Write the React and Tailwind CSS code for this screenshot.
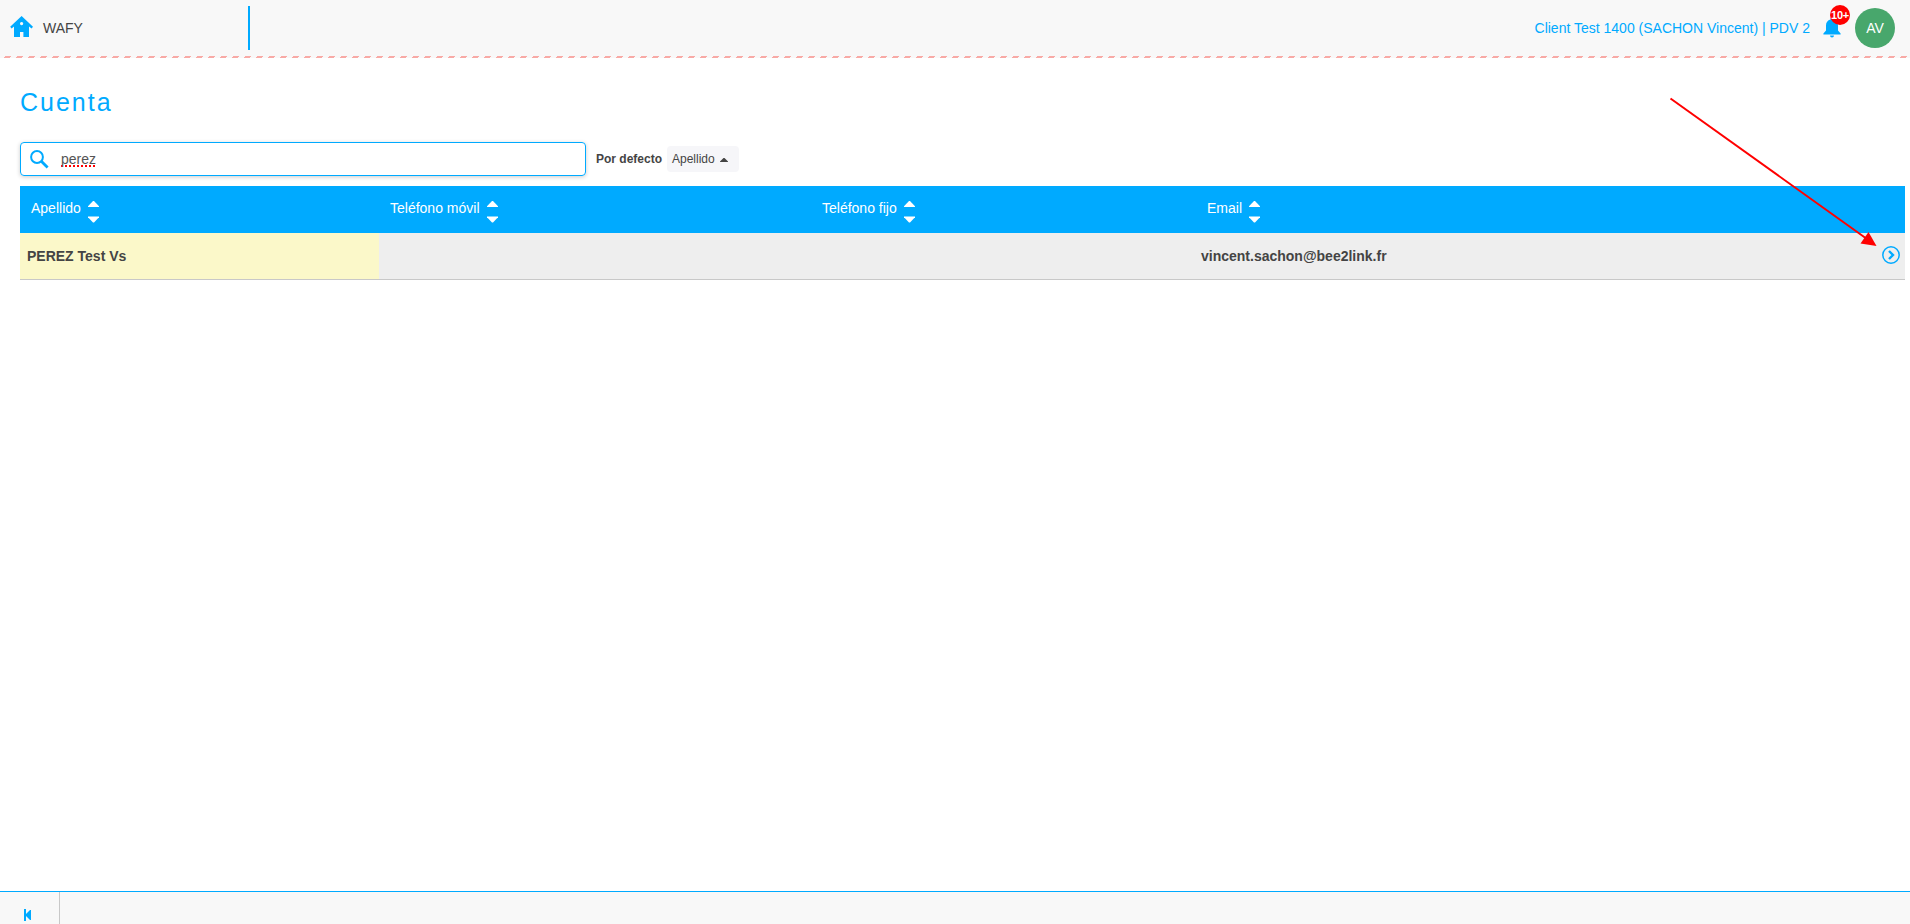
import { useState } from "react";

const BLUE = "#00aaff";

const columns = [
  { key: "name", label: "Apellido", width: "w-[359px]", cell: "pl-[7px] bg-[#fbf8c9]" },
  { key: "mobile", label: "Teléfono móvil", width: "w-[432px]", cell: "pl-[7px]" },
  { key: "phone", label: "Teléfono fijo", width: "w-[385px]", cell: "pl-[7px]" },
  { key: "email", label: "Email", width: "flex-1", cell: "pl-[5px]" },
];

const accounts = [
  { id: 1, name: "PEREZ Test Vs", mobile: "", phone: "", email: "vincent.sachon@bee2link.fr" },
];

const HomeIcon = () => (
  <svg className="mb-[3px] h-[21px] w-[23px]" viewBox="0 0 23 21" fill={BLUE}>
    <path
      fillRule="evenodd"
      d="M11.6 0 L23 10.8 L21.6 12.4 L19 10.6 V21 H13.4 V16 H10 V21 H4 V10.6 L1.6 12.4 L0.2 10.8 Z M11.6 6 a1.6 1.6 0 1 0 0.01 0 Z"
    />
  </svg>
);

const BellIcon = () => (
  <svg className="h-[20px] w-[18px]" viewBox="0 0 18 20" fill={BLUE}>
    <path d="M9 0 C10 0 10.6 0.7 10.6 1.6 C13.4 2.3 15 4.6 15 7.5 V12.5 L17.6 15.5 V16.6 H0.4 V15.5 L3 12.5 V7.5 C3 4.6 4.6 2.3 7.4 1.6 C7.4 0.7 8 0 9 0 Z" />
    <path d="M7 17.6 H11 A2 2 0 0 1 7 17.6 Z" />
  </svg>
);

const SearchIcon = () => (
  <svg className="h-[19px] w-[19px]" viewBox="0 0 19 19" fill="none" stroke={BLUE}>
    <circle cx="7" cy="7" r="5.9" strokeWidth="2" />
    <path d="M11.3 11.3 L17.6 17.6" strokeWidth="2.8" />
  </svg>
);

const SortIcon = () => (
  <svg className="h-[22px] w-[11px]" viewBox="0 0 11 22" fill="#fff">
    <path d="M5 0 H6 L11 5.2 V6 H0 V5.2 Z" />
    <path d="M0 15.4 H11 V16.2 L6 21.4 H5 L0 16.2 Z" />
  </svg>
);

const OpenIcon = () => (
  <svg className="mb-[2px] h-[18px] w-[18px]" viewBox="0 0 18 18" fill="none" stroke={BLUE}>
    <circle cx="9" cy="9" r="8.2" strokeWidth="1.5" />
    <path d="M7 5 L11 9 L7 13" strokeWidth="2.4" />
  </svg>
);

const Header = () => (
  <header className="h-[58px] shrink-0 bg-[#f8f8f8]">
    <div className="flex h-14 items-center">
      <div className="flex w-[248px] items-center pl-[10px]">
        <HomeIcon />
        <span className="ml-[10px] text-[14px] text-[#444]">WAFY</span>
      </div>
      <div className="h-11 w-[2px] bg-[#00aaff]" />
      <div className="ml-auto flex items-center pr-[15px]">
        <span className="text-[14px] text-[#00aaff]">
          Client Test 1400 (SACHON Vincent) | PDV 2
        </span>
        <div className="relative ml-[13px]">
          <BellIcon />
          <span className="absolute -top-[13px] left-[7px] flex h-5 w-5 items-center justify-center rounded-full bg-[#ff0000] text-[11px] font-bold tracking-[-0.3px] text-white">
            10+
          </span>
        </div>
        <div className="ml-[14px] flex h-10 w-10 items-center justify-center rounded-full bg-[#48a76c] text-[14px] text-white">
          AV
        </div>
      </div>
    </div>
    <svg className="block h-[2px] w-full">
      <defs>
        <pattern id="dashes" x="4" width="12" height="2" patternUnits="userSpaceOnUse">
          <path d="M1 0 H7 V1 H6 V2 H0 V1 H1 Z" fill="#f8aaa6" />
        </pattern>
      </defs>
      <rect x="4" width="100%" height="2" fill="url(#dashes)" />
    </svg>
  </header>
);

const App = () => {
  const [search, setSearch] = useState("perez");

  return (
    <div className="relative flex h-screen flex-col overflow-hidden bg-white font-['Liberation_Sans',Arial,sans-serif] text-[#444]">
      <Header />

      <main className="flex-1 pl-5 pr-[5px] pt-[28px]">
        <h1 className="text-[25px] leading-[32px] tracking-[2px] text-[#00aaff]">Cuenta</h1>

        <div className="mt-6 flex h-[34px] items-center">
          <label className="flex h-[34px] w-[566px] items-center rounded-[4px] border border-[#00aaff] pl-[9px] shadow-[0_1px_4px_rgba(0,0,0,0.2)]">
            <SearchIcon />
            <input
              value={search}
              onChange={(e) => setSearch(e.target.value)}
              className="ml-[12px] flex-1 text-[14px] text-[#555] underline decoration-[#ff0000] decoration-dotted decoration-2 underline-offset-2 outline-none [text-decoration-skip-ink:none]"
            />
          </label>
          <span className="ml-[10px] text-[12px] font-bold">Por defecto</span>
          <button className="ml-[5px] flex h-[26px] w-[72px] items-center rounded-[4px] bg-[#f6f6f9] pl-[5px] text-[12px]">
            Apellido
            <svg className="ml-[5px] mt-px h-[4px] w-[8px]" viewBox="0 0 8 4" fill="#444">
              <path d="M3.5 0 H4.5 L8 3.5 V4 H0 V3.5 Z" />
            </svg>
          </button>
        </div>

        <div className="mt-[10px]">
          <div className="flex h-[47px] bg-[#00aaff] text-[14px] text-white">
            {columns.map((col) => (
              <div key={col.key} className={`flex pl-[11px] pt-[15px] ${col.width}`}>
                <span className="-mt-px mr-[7px] leading-4">{col.label}</span>
                <SortIcon />
              </div>
            ))}
          </div>
          {accounts.map((account) => (
            <div
              key={account.id}
              className="flex h-[47px] border-b border-[#c8c8c8] bg-[#eee] text-[14px] font-bold"
            >
              {columns.map((col) => (
                <div key={col.key} className={`flex items-center ${col.width} ${col.cell}`}>
                  {account[col.key]}
                </div>
              ))}
              <button className="mr-[5px] flex items-center">
                <OpenIcon />
              </button>
            </div>
          ))}
        </div>
      </main>

      <footer className="flex h-[33px] shrink-0 border-t border-[#00aaff] bg-[#f8f8f8]">
        <div className="w-[60px] border-r border-[#c8c8c8] pl-6 pt-[17px]">
          <svg className="h-3 w-[7px]" viewBox="0 0 7 12" fill={BLUE}>
            <path d="M0 0 H2 V5 L6 1 H7 V11 H6 L2 7 V12 H0 Z" />
          </svg>
        </div>
      </footer>

      {/* Pointer to the row's open button */}
      <svg className="pointer-events-none absolute left-[1660px] top-[90px] h-[170px] w-[230px]">
        <path d="M10.5 8.5 L207 149" stroke="#ff0000" strokeWidth="2" />
        <path d="M216.5 156 L208.5 142 L200.5 153.5 Z" fill="#ff0000" />
      </svg>
    </div>
  );
};

export default App;
